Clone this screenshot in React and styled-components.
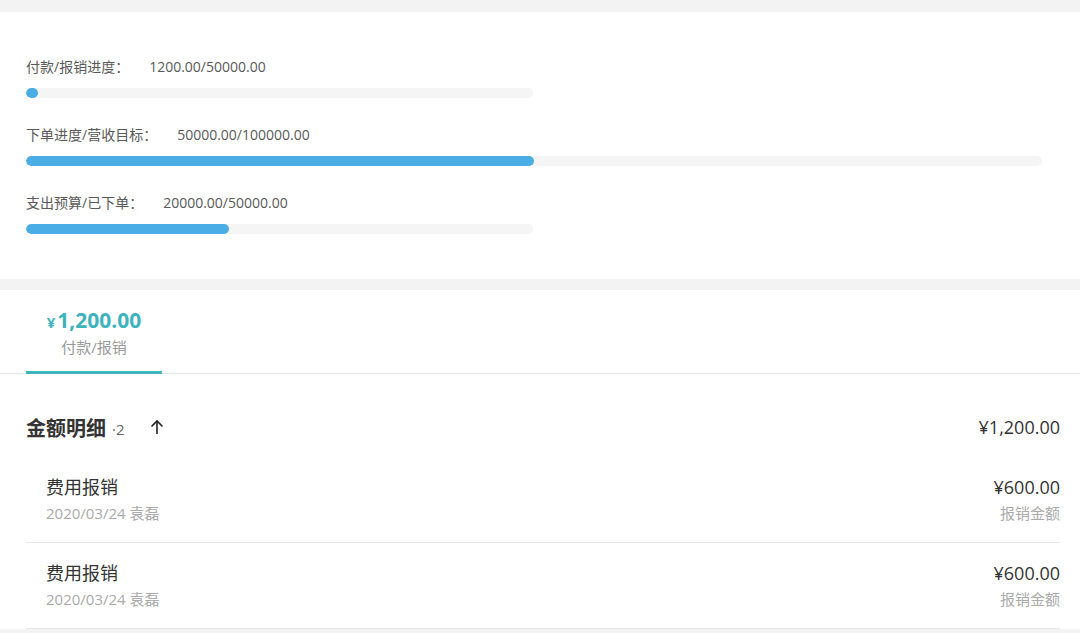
import React from "react";
import styled, { createGlobalStyle } from "styled-components";

const Global = createGlobalStyle`
  html, body { margin: 0; padding: 0; background: #fff; }
  body {
    font-family: "Open Sans", "Noto Sans CJK SC", sans-serif;
    color: #333;
    width: 1080px;
    overflow: hidden;
  }
`;

const Band = styled.div`
  height: ${(p) => p.h}px;
  background: #f3f3f4;
`;

const ProgressPanel = styled.section`
  padding: 45px 0 45px 26px;
  display: flex;
  flex-direction: column;
  gap: 27px;
`;

const ProgressRow = styled.div`
  display: flex;
  flex-direction: column;
  gap: 11px;
`;

const ProgressLabel = styled.div`
  font-size: 14px;
  line-height: 20px;
  color: #595959;
  display: flex;
  gap: 20px;
`;

const Track = styled.div`
  width: ${(p) => p.w}px;
  height: 10px;
  border-radius: 5px;
  background: #f5f5f5;
  overflow: hidden;
`;

const Fill = styled.div`
  height: 100%;
  border-radius: 5px;
  background: #4aade6;
  min-width: 12px;
`;

const Tabs = styled.div`
  display: flex;
  padding-left: 26px;
  border-bottom: 1px solid #e6e6e6;
`;

const Tab = styled.div`
  width: 136px;
  height: 84px;
  box-sizing: border-box;
  padding-top: 15px;
  display: flex;
  flex-direction: column;
  align-items: center;
  border-bottom: 3px solid #3db3bc;
  margin-bottom: -1px;
`;

const TabAmount = styled.div`
  color: #3db3bc;
  font-size: 21px;
  font-weight: 700;
  line-height: 30px;
  span { font-size: 15px; margin-right: 2px; }
`;

const TabLabel = styled.div`
  color: #999;
  font-size: 15px;
  line-height: 20px;
`;

const List = styled.section`
  margin: 39px 20px 0 26px;
`;

const Header = styled.div`
  display: flex;
  align-items: center;
  justify-content: space-between;
  height: 28px;
  margin-bottom: 16px;
`;

const Title = styled.div`
  display: flex;
  align-items: center;
  font-size: 20px;
  font-weight: 700;
  color: #333;
  small {
    font-size: 15px;
    font-weight: 400;
    color: #666;
    margin: 3px 0 0 6px;
  }
  svg { margin-left: 25px; }
`;

const Total = styled.div`
  font-size: 18px;
  color: #333;
`;

const Item = styled.div`
  display: flex;
  justify-content: space-between;
  padding: 18px 0 19px 20px;
  border-bottom: 1px solid #e8e8e8;
`;

const Col = styled.div`
  display: flex;
  flex-direction: column;
  align-items: ${(p) => (p.right ? "flex-end" : "flex-start")};
  gap: 4px;
`;

const Main = styled.div`
  font-size: 18px;
  line-height: 24px;
  color: #333;
`;

const Sub = styled.div`
  font-size: 15px;
  line-height: 20px;
  color: #aaa;
`;

const progress = [
  { label: "付款/报销进度：", value: "1200.00/50000.00", pct: 1200 / 50000, w: 507 },
  { label: "下单进度/营收目标：", value: "50000.00/100000.00", pct: 0.5, w: 1016 },
  { label: "支出预算/已下单：", value: "20000.00/50000.00", pct: 0.4, w: 507 },
];

const items = [
  { name: "费用报销", meta: "2020/03/24 袁磊", amount: "¥600.00" },
  { name: "费用报销", meta: "2020/03/24 袁磊", amount: "¥600.00" },
];

const ArrowUp = () => (
  <svg width="14" height="16" viewBox="0 0 14 16" fill="none" stroke="#222" strokeWidth="1.6">
    <path d="M7 15V2" />
    <path d="M1.5 7.5L7 2l5.5 5.5" />
  </svg>
);

export default function App() {
  return (
    <>
      <Global />
      <Band h={12} />
      <ProgressPanel>
        {progress.map((p, i) => (
          <ProgressRow key={i}>
            <ProgressLabel>
              <span>{p.label}</span>
              <span>{p.value}</span>
            </ProgressLabel>
            <Track w={p.w}>
              <Fill style={{ width: `${p.pct * 100}%` }} />
            </Track>
          </ProgressRow>
        ))}
      </ProgressPanel>
      <Band h={11} />
      <Tabs>
        <Tab>
          <TabAmount><span>¥</span>1,200.00</TabAmount>
          <TabLabel>付款/报销</TabLabel>
        </Tab>
      </Tabs>
      <List>
        <Header>
          <Title>
            金额明细<small>·2</small>
            <ArrowUp />
          </Title>
          <Total>¥1,200.00</Total>
        </Header>
        {items.map((it, i) => (
          <Item key={i}>
            <Col>
              <Main>{it.name}</Main>
              <Sub>{it.meta}</Sub>
            </Col>
            <Col right>
              <Main>{it.amount}</Main>
              <Sub>报销金额</Sub>
            </Col>
          </Item>
        ))}
      </List>
      <Band h={10} />
    </>
  );
}
